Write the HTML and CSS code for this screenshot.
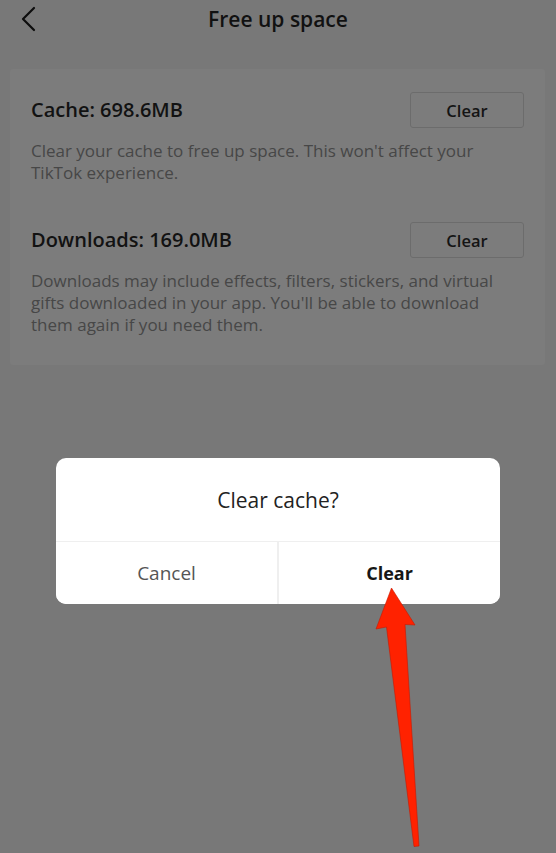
FILE: index.html
```html
<!DOCTYPE html>
<html lang="en">
<head>
  <meta charset="UTF-8">
  <title>Free up space</title>
  <link rel="stylesheet" href="styles.css">
</head>
<body>
  <div class="screen">
    <header class="topbar">
      <button class="back" aria-label="Back">
        <svg width="16" height="26" viewBox="0 0 16 26">
          <path d="M13 2 L2 13 L13 24" fill="none" stroke="#0d0d0d" stroke-width="2.2" stroke-linecap="round" stroke-linejoin="round"/>
        </svg>
      </button>
      <h1>Free up space</h1>
    </header>

    <section class="storage">
      <div class="item">
        <div class="item-head">
          <span class="item-title">Cache: 698.6MB</span>
          <button class="clear-button">Clear</button>
        </div>
        <p class="item-desc">Clear your cache to free up space. This won't affect your TikTok experience.</p>
      </div>
      <div class="item">
        <div class="item-head">
          <span class="item-title">Downloads: 169.0MB</span>
          <button class="clear-button">Clear</button>
        </div>
        <p class="item-desc">Downloads may include effects, filters, stickers, and virtual gifts downloaded in your app. You'll be able to download them again if you need them.</p>
      </div>
    </section>

    <div class="dialog">
      <div class="dialog-title">Clear cache?</div>
      <div class="dialog-actions">
        <button class="dialog-btn">Cancel</button>
        <button class="dialog-btn primary">Clear</button>
      </div>
    </div>

    <svg class="pointer" width="556" height="853" viewBox="0 0 556 853">
      <path d="M391.5 588 L415 625 L405 624.5 L419 846 L414 846.5 L386.5 627 L376 629 Z" fill="#ff2200" stroke="#c81a00" stroke-width="0.6" stroke-linejoin="round"/>
    </svg>
  </div>
</body>
</html>
```

FILE: styles.css
```css
body {
  margin: 0;
  padding: 0;
  background-color: #787878;
  font-family: 'Open Sans', 'Liberation Sans', sans-serif;
}
.screen {
  position: relative;
  width: 556px;
  height: 853px;
  overflow: hidden;
}
.topbar {
  position: relative;
  height: 38px;
  display: flex;
  align-items: center;
  justify-content: center;
}
.back {
  position: absolute;
  left: 21px;
  top: 6px;
  padding: 0;
  border: none;
  background: transparent;
}
.topbar h1 {
  margin: 0;
  font-size: 21px;
  line-height: 24px;
  font-weight: 600;
  color: #111;
}
.storage {
  margin: 31px 11px 0 10px;
  background: #7c7c7c;
  border-radius: 3px;
  padding: 23px 21px 29px 21px;
}
.item + .item {
  margin-top: 38px;
}
.item-head {
  display: flex;
  justify-content: space-between;
  align-items: center;
}
.item-title {
  font-size: 20px;
  line-height: 24px;
  font-weight: 600;
  color: #121212;
}
.clear-button {
  width: 114px;
  height: 36px;
  background: transparent;
  border: 1px solid #6c6c6c;
  border-radius: 3px;
  font-family: inherit;
  font-size: 16.5px;
  font-weight: 600;
  color: #141414;
}
.item-desc {
  margin: 12px 0 0;
  font-size: 17px;
  line-height: 22px;
  color: #474747;
}
.dialog {
  position: absolute;
  left: 56px;
  top: 458px;
  width: 444px;
  height: 146px;
  background: #fff;
  border-radius: 10px;
  overflow: hidden;
  display: flex;
  flex-direction: column;
}
.dialog-title {
  height: 83px;
  display: flex;
  align-items: center;
  justify-content: center;
  font-size: 21px;
  color: #222;
  border-bottom: 1px solid #efefef;
}
.dialog-actions {
  flex: 1;
  display: flex;
}
.dialog-btn {
  flex: 1;
  border: none;
  background: #fff;
  font-family: inherit;
  font-size: 19px;
  color: #555;
  padding: 0;
}
.dialog-btn + .dialog-btn {
  border-left: 2px solid #efefef;
}
.dialog-btn.primary {
  font-size: 18px;
  font-weight: 700;
  color: #161616;
}
.pointer {
  position: absolute;
  left: 0;
  top: 0;
  pointer-events: none;
}
```
